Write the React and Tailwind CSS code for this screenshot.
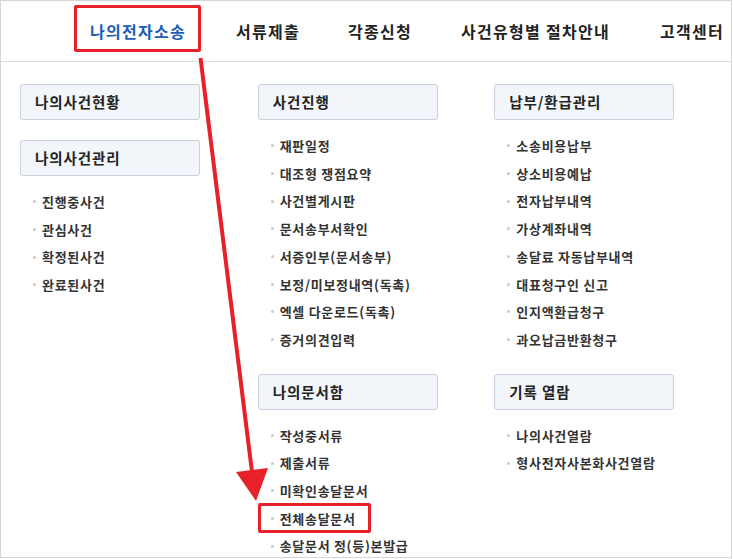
import React from 'react';

const font = { fontFamily: '"Noto Sans CJK KR", "Noto Sans", sans-serif' };

const navItems = [
  { label: '나의전자소송', w: 'w-[146px] text-[#1b5cb5]' },
  { label: '서류제출', w: 'w-[112px]' },
  { label: '각종신청', w: 'w-[113px]' },
  { label: '사건유형별 절차안내', w: 'w-[199px]' },
  { label: '고객센터', w: '' },
];

const columns = [
  [
    { title: '나의사건현황', items: [] },
    { title: '나의사건관리', items: ['진행중사건', '관심사건', '확정된사건', '완료된사건'] },
  ],
  [
    {
      title: '사건진행',
      items: ['재판일정', '대조형 쟁점요약', '사건별게시판', '문서송부서확인', '서증인부(문서송부)', '보정/미보정내역(독촉)', '엑셀 다운로드(독촉)', '증거의견입력'],
    },
    { title: '나의문서함', items: ['작성중서류', '제출서류', '미확인송달문서', '전체송달문서', '송달문서 정(등)본발급'] },
  ],
  [
    {
      title: '납부/환급관리',
      items: ['소송비용납부', '상소비용예납', '전자납부내역', '가상계좌내역', '송달료 자동납부내역', '대표청구인 신고', '인지액환급청구', '과오납금반환청구'],
    },
    { title: '기록 열람', items: ['나의사건열람', '형사전자사본화사건열람'] },
  ],
];

function Section({ title, items }) {
  return (
    <div className="mb-[20px]">
      <div className="w-[180px] h-[36px] flex items-center pl-[14px] bg-[#f2f6fa] border border-[#c9d1dd] rounded-[3px] text-[14.5px] tracking-[0.9px] font-bold text-[#222]">
        {title}
      </div>
      {items.length > 0 && (
        <ul className="mt-[12px]">
          {items.map((it) => (
            <li key={it} className="h-[27.7px] flex items-center text-[13px] tracking-[0.7px] font-bold text-[#333]">
              <span className="w-[3px] h-[3px] rounded-full bg-[#c8c8c8] ml-[13px] mr-[6px]" />
              {it}
            </li>
          ))}
        </ul>
      )}
    </div>
  );
}

export default function App() {
  return (
    <div style={font} className="relative w-[733px] h-[559px] bg-white overflow-hidden">
      <div className="w-[732px] h-[558px] border border-[#d6d6d6] overflow-hidden">
        {/* 상단 메뉴 */}
        <nav className="h-[61px] border-b border-[#dedede] flex items-center pl-[89px] text-[16px] tracking-[1.3px] font-bold text-[#222] whitespace-nowrap">
          {navItems.map((n) => (
            <span key={n.label} className={'shrink-0 ' + n.w}>
              {n.label}
            </span>
          ))}
        </nav>

        {/* 서브 메뉴 */}
        <div className="flex pl-[19px] pt-[22px]">
          {columns.map((col, i) => (
            <div key={i} className={i === 0 ? 'w-[238px]' : 'w-[237px]'}>
              {col.map((s) => (
                <Section key={s.title} {...s} />
              ))}
            </div>
          ))}
        </div>
      </div>

      {/* 주석 표시 */}
      <div className="absolute left-[74px] top-[5px] w-[127px] h-[47px] border-[3px] border-[#e8202a] rounded-[2px]" />
      <div className="absolute left-[258px] top-[503px] w-[113px] h-[30px] border-[3px] border-[#e8202a] rounded-[2px]" />
      <svg className="absolute left-0 top-0 pointer-events-none" width="733" height="559">
        <line x1="200.5" y1="58" x2="252" y2="472" stroke="#e8202a" strokeWidth="4" />
        <polygon points="236,472 268,468 256,501" fill="#e8202a" />
      </svg>
    </div>
  );
}
